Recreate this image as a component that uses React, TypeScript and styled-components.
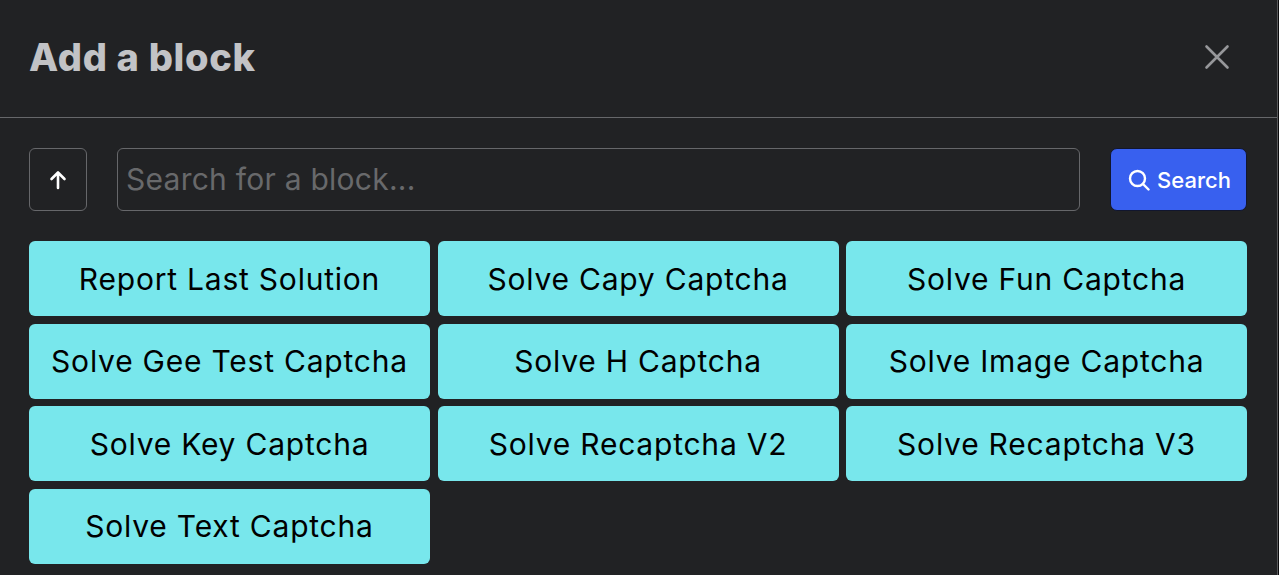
import React from 'react';
import styled, { createGlobalStyle } from 'styled-components';

const blocks = [
  'Report Last Solution',
  'Solve Capy Captcha',
  'Solve Fun Captcha',
  'Solve Gee Test Captcha',
  'Solve H Captcha',
  'Solve Image Captcha',
  'Solve Key Captcha',
  'Solve Recaptcha V2',
  'Solve Recaptcha V3',
  'Solve Text Captcha',
];

const fontStack = '"Inter", "Noto Sans", "Liberation Sans", sans-serif';

const GlobalStyle = createGlobalStyle`
  html, body {
    margin: 0;
    padding: 0;
    height: 100%;
    overflow: hidden;
    background: #0b0b0c;
  }
  * {
    box-sizing: border-box;
  }
`;

const Dialog = styled.div`
  width: 1278px;
  height: 575px;
  background: #212224;
  border-right: 1px solid #58595b;
  font-family: ${fontStack};
`;

const Header = styled.header`
  height: 118px;
  display: flex;
  align-items: center;
  justify-content: space-between;
  padding: 0 45px 4px 29px;
  border-bottom: 1px solid #66676a;
`;

const Title = styled.h2`
  margin: 0;
  color: #c2c3c6;
  font-size: 38px;
  font-weight: 800;
  letter-spacing: 0.7px;
`;

const CloseButton = styled.button`
  width: 30px;
  height: 30px;
  padding: 0;
  border: 0;
  background: none;
  color: #96979a;
  display: flex;
  align-items: center;
  justify-content: center;
`;

const Body = styled.div`
  padding: 30px 30px 0 29px;
`;

const Toolbar = styled.div`
  display: flex;
  align-items: stretch;
  height: 63px;
`;

const UpButton = styled.button`
  width: 58px;
  margin-right: 30px;
  padding: 0;
  border: 1px solid #66676a;
  border-radius: 6px;
  background: none;
  color: #fff;
  display: flex;
  align-items: center;
  justify-content: center;
`;

const SearchInput = styled.input`
  flex: 1;
  min-width: 0;
  height: 63px;
  padding: 0 8px 2px;
  border: 1px solid #66676a;
  border-radius: 6px;
  background: none;
  color: #fff;
  font-family: ${fontStack};
  font-size: 30px;
  letter-spacing: 0.25px;
  outline: none;

  &::placeholder {
    color: #68696b;
    opacity: 1;
  }
`;

const SearchButton = styled.button`
  width: 137px;
  height: 63px;
  margin-left: 30px;
  padding: 0 0 0 2px;
  border: 1px solid #11162e;
  border-radius: 7px;
  background: #3860ef;
  color: #fff;
  font-family: ${fontStack};
  font-size: 22px;
  font-weight: 500;
  display: flex;
  align-items: center;
  justify-content: center;
  gap: 7px;
`;

const BlockGrid = styled.div`
  margin-top: 30px;
  display: grid;
  grid-template-columns: repeat(3, 1fr);
  grid-auto-rows: 75px;
  gap: 7.5px;
`;

const BlockButton = styled.button`
  padding: 0;
  border: 0;
  border-radius: 6px;
  background: #78e7ec;
  color: #000;
  font-family: ${fontStack};
  font-size: 30px;
  font-weight: 400;
  letter-spacing: 0.78px;
`;

export default function App() {
  return (
    <Dialog>
      <GlobalStyle />
      <Header>
        <Title>Add a block</Title>
        <CloseButton aria-label="Close">
          <svg width="26" height="26" viewBox="0 0 26 26" fill="none" stroke="currentColor" strokeWidth="2.6" strokeLinecap="round">
            <path d="M2.5 2.5 23.5 23.5M23.5 2.5 2.5 23.5" />
          </svg>
        </CloseButton>
      </Header>
      <Body>
        <Toolbar>
          <UpButton aria-label="Up">
            <svg width="18" height="20" viewBox="0 0 18 20" fill="none" stroke="currentColor" strokeWidth="2.6" strokeLinecap="round" strokeLinejoin="round">
              <path d="M9 18V2.5M2.5 9 9 2.5 15.5 9" />
            </svg>
          </UpButton>
          <SearchInput placeholder="Search for a block..." />
          <SearchButton>
            <svg width="22" height="22" viewBox="0 0 22 22" fill="none" stroke="currentColor" strokeWidth="2.4" strokeLinecap="round">
              <circle cx="9.5" cy="9.5" r="7.5" />
              <path d="M15 15 20.5 20.5" />
            </svg>
            Search
          </SearchButton>
        </Toolbar>
        <BlockGrid>
          {blocks.map(name => (
            <BlockButton key={name}>{name}</BlockButton>
          ))}
        </BlockGrid>
      </Body>
    </Dialog>
  );
}
